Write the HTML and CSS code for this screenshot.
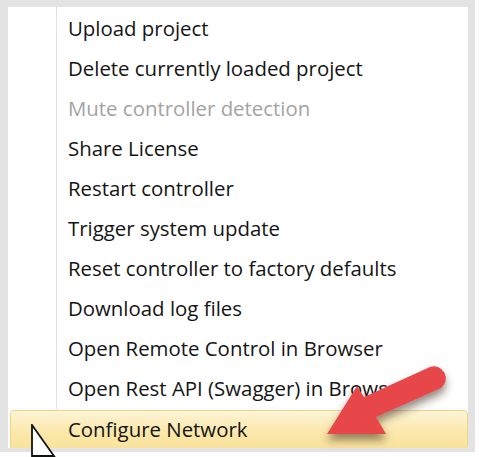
FILE: index.html
```html
<!DOCTYPE html>
<html lang="en">
<head>
  <meta charset="UTF-8" />
  <title>Controller menu</title>
  <link rel="stylesheet" href="styles.css">
</head>
<body>
  <div class="frame">
    <ul class="menu">
      <li class="item">Upload project</li>
      <li class="item">Delete currently loaded project</li>
      <li class="item disabled">Mute controller detection</li>
      <li class="item">Share License</li>
      <li class="item">Restart controller</li>
      <li class="item">Trigger system update</li>
      <li class="item">Reset controller to factory defaults</li>
      <li class="item">Download log files</li>
      <li class="item">Open Remote Control in Browser</li>
      <li class="item">Open Rest API (Swagger) in Browser</li>
      <li class="item active">Configure Network</li>
    </ul>
  </div>

  <!-- mouse pointer -->
  <svg class="pointer" width="30" height="34" viewBox="0 0 30 34">
    <path d="M2 1 L2 32 L24 32 Z" fill="#fff" stroke="#111" stroke-width="1.8" stroke-linejoin="miter"/>
  </svg>

  <!-- red annotation arrow -->
  <svg class="callout" width="479" height="457" viewBox="0 0 479 457">
    <defs>
      <filter id="shade" x="-30%" y="-30%" width="160%" height="180%">
        <feDropShadow dx="0" dy="6" stdDeviation="4.5" flood-color="#3a2a10" flood-opacity="0.55"/>
      </filter>
    </defs>
    <path filter="url(#shade)" fill="#e8464a"
      d="M327 434 L357 386 L364 397 L430 367 A12 12 0 0 1 441 388 L376 417 L386 434 Z"/>
  </svg>
</body>
</html>
```

FILE: styles.css
```css
body {
  margin: 0;
  background: #fff;
  font-family: "Open Sans", "Noto Sans", sans-serif;
  position: relative;
  width: 479px;
  height: 457px;
  overflow: hidden;
}

.frame {
  width: 475px;
  height: 452px;
  box-sizing: border-box;
  padding: 7px 7px 7px 8px;
  background: #e3e3e3;
}

.menu {
  list-style: none;
  margin: 0;
  padding: 3px 0 0 0;
  height: 438px;
  overflow: hidden;
  background:
    linear-gradient(to right, transparent 48px, #e2e2e2 48px, #e2e2e2 49px, #fff 49px, #fff 50px, transparent 50px),
    #fff;
}

.item {
  height: 40px;
  line-height: 37px;
  padding-left: 60px;
  font-size: 20.4px;
  color: #141414;
  white-space: nowrap;
  box-sizing: border-box;
}

.disabled {
  color: #a3a3a3;
}

.active {
  margin-left: 2px;
  padding-left: 57px;
  border: 1px solid #ecd48a;
  border-radius: 4px;
  background: linear-gradient(to bottom, #fdf4d6, #fbe7a8 60%, #f9e29b);
}

.pointer {
  position: absolute;
  left: 30px;
  top: 424px;
}

.callout {
  position: absolute;
  left: 0;
  top: 0;
}
```
